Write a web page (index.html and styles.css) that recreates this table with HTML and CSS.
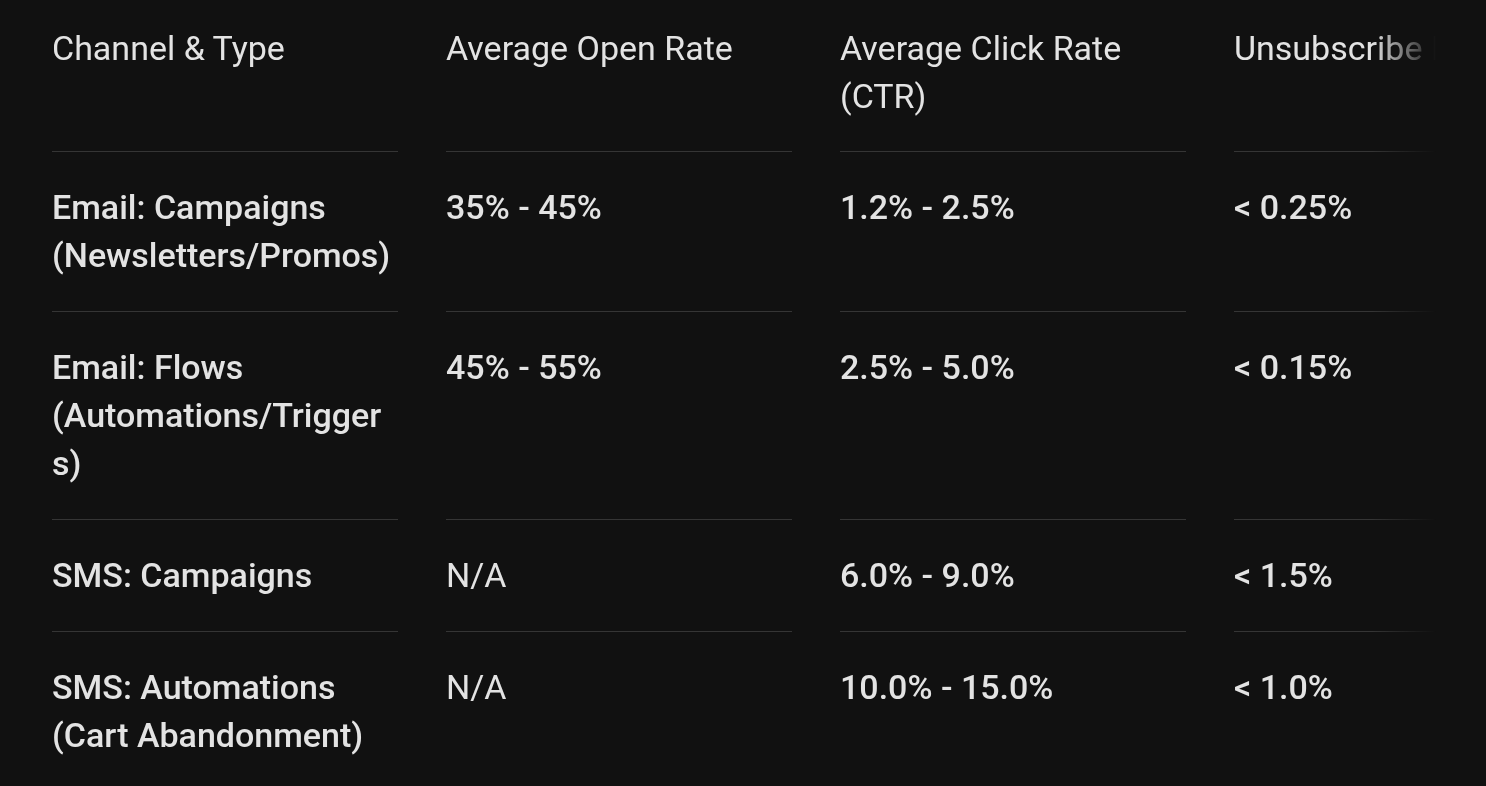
FILE: index.html
```html
<!DOCTYPE html>
<html lang="en">
<head>
<meta charset="utf-8">
<title>Channel benchmarks</title>
<link rel="stylesheet" href="styles.css">
</head>
<body>
<div class="table-wrap">
  <table class="bench">
    <thead>
      <tr>
        <th>Channel &amp; Type</th>
        <th>Average Open Rate</th>
        <th>Average Click Rate (CTR)</th>
        <th>Unsubscribe Rate</th>
      </tr>
    </thead>
    <tbody>
      <tr>
        <td>Email: Campaigns (Newsletters/Promos)</td>
        <td>35% - 45%</td>
        <td>1.2% - 2.5%</td>
        <td>&lt; 0.25%</td>
      </tr>
      <tr>
        <td>Email: Flows (Automations/Triggers)</td>
        <td>45% - 55%</td>
        <td>2.5% - 5.0%</td>
        <td>&lt; 0.15%</td>
      </tr>
      <tr>
        <td>SMS: Campaigns</td>
        <td class="na">N/A</td>
        <td>6.0% - 9.0%</td>
        <td>&lt; 1.5%</td>
      </tr>
      <tr>
        <td>SMS: Automations (Cart Abandonment)</td>
        <td class="na">N/A</td>
        <td>10.0% - 15.0%</td>
        <td>&lt; 1.0%</td>
      </tr>
    </tbody>
  </table>
</div>
</body>
</html>
```

FILE: styles.css
```css
html, body {
  margin: 0;
  padding: 0;
  background: #111111;
  height: 100%;
  overflow: hidden;
}

body {
  color: #e3e3e3;
  font-family: Roboto, "Liberation Sans", sans-serif;
  font-size: 34px;
  line-height: 48px;
}

.table-wrap {
  margin-left: 4px;
  width: 1432px;
  overflow: hidden;
  -webkit-mask-image: linear-gradient(to right, #000 calc(100% - 64px), transparent 100%);
  mask-image: linear-gradient(to right, #000 calc(100% - 64px), transparent 100%);
}

.bench {
  border-collapse: separate;
  border-spacing: 48px 0;
  table-layout: fixed;
  width: 1624px;
}

.bench th,
.bench td {
  width: 346px;
  text-align: left;
  vertical-align: top;
  border-bottom: 1px solid #353535;
  overflow-wrap: anywhere;
  padding: 31px 0 32px;
}

.bench th {
  font-weight: 400;
  padding: 24px 0 31px;
}

.bench td {
  font-weight: 500;
}

.bench td.na {
  font-weight: 400;
}

.bench tbody tr:last-child td {
  border-bottom: none;
}
```
